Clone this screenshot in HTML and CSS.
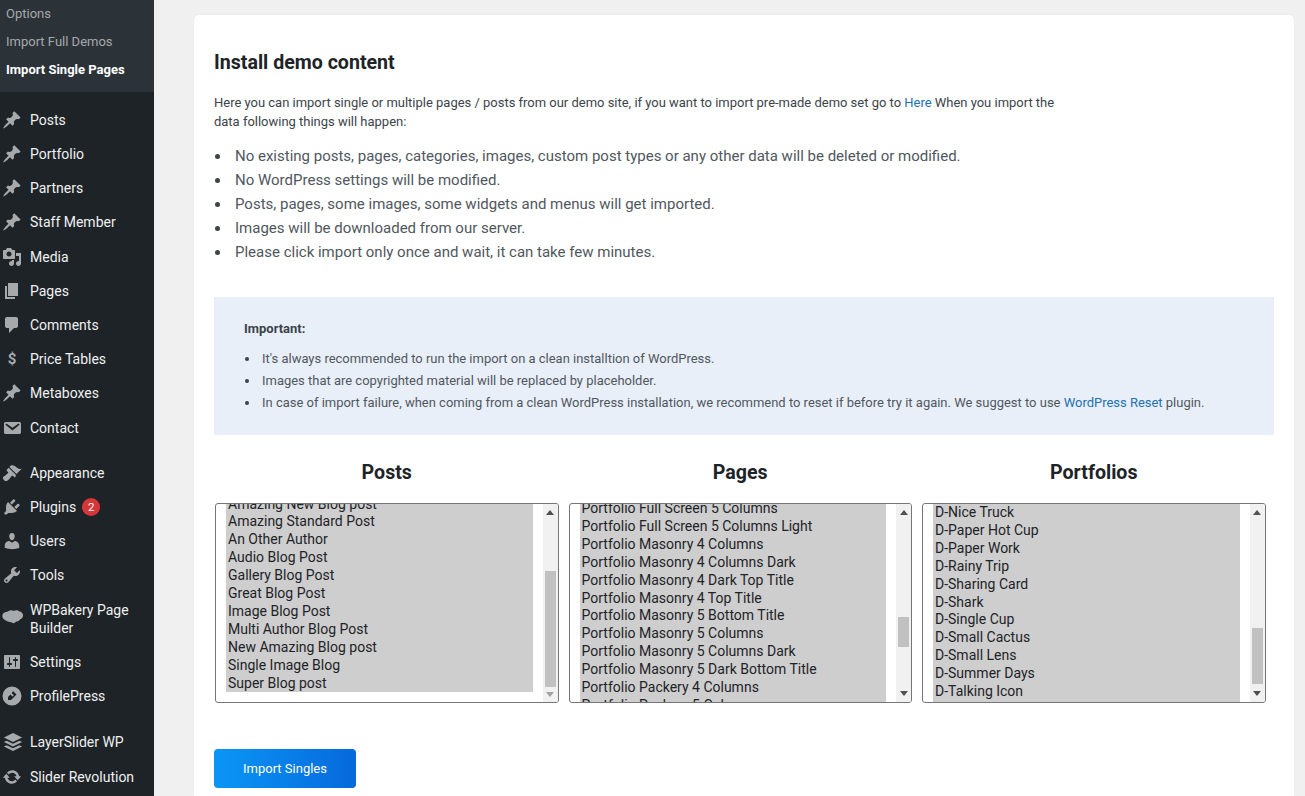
FILE: index.html
```html
<!DOCTYPE html>
<html lang="en">
<head>
<meta charset="utf-8">
<title>Install demo content</title>
<link rel="stylesheet" href="styles.css">
</head>
<body>
<aside class="sidebar">
  <ul class="submenu">
    <li>Options</li>
    <li>Import Full Demos</li>
    <li class="current">Import Single Pages</li>
  </ul>
  <ul class="menu">
    <li><svg viewBox="0 0 20 20"><path d="M10.44 3.02l1.82-1.82 6.36 6.35-1.83 1.82c-1.05-.68-2.48-.57-3.41.36l-.75.75c-.92.93-1.04 2.35-.35 3.41l-1.83 1.82-2.41-2.41-2.8 2.79c-.42.42-3.38 2.71-3.8 2.29s1.86-3.39 2.28-3.81l2.79-2.79L4.1 9.36l1.83-1.82c1.05.69 2.48.57 3.41-.36l.75-.75c.93-.92 1.04-2.35.35-3.41z"/></svg><span>Posts</span></li>
    <li><svg viewBox="0 0 20 20"><path d="M10.44 3.02l1.82-1.82 6.36 6.35-1.83 1.82c-1.05-.68-2.48-.57-3.41.36l-.75.75c-.92.93-1.04 2.35-.35 3.41l-1.83 1.82-2.41-2.41-2.8 2.79c-.42.42-3.38 2.71-3.8 2.29s1.86-3.39 2.28-3.81l2.79-2.79L4.1 9.36l1.83-1.82c1.05.69 2.48.57 3.41-.36l.75-.75c.93-.92 1.04-2.35.35-3.41z"/></svg><span>Portfolio</span></li>
    <li><svg viewBox="0 0 20 20"><path d="M10.44 3.02l1.82-1.82 6.36 6.35-1.83 1.82c-1.05-.68-2.48-.57-3.41.36l-.75.75c-.92.93-1.04 2.35-.35 3.41l-1.83 1.82-2.41-2.41-2.8 2.79c-.42.42-3.38 2.71-3.8 2.29s1.86-3.39 2.28-3.81l2.79-2.79L4.1 9.36l1.83-1.82c1.05.69 2.48.57 3.41-.36l.75-.75c.93-.92 1.04-2.35.35-3.41z"/></svg><span>Partners</span></li>
    <li><svg viewBox="0 0 20 20"><path d="M10.44 3.02l1.82-1.82 6.36 6.35-1.83 1.82c-1.05-.68-2.48-.57-3.41.36l-.75.75c-.92.93-1.04 2.35-.35 3.41l-1.83 1.82-2.41-2.41-2.8 2.79c-.42.42-3.38 2.71-3.8 2.29s1.86-3.39 2.28-3.81l2.79-2.79L4.1 9.36l1.83-1.82c1.05.69 2.48.57 3.41-.36l.75-.75c.93-.92 1.04-2.35.35-3.41z"/></svg><span>Staff Member</span></li>
    <li><svg viewBox="0 0 20 20"><path d="M13 11V4c0-.55-.45-1-1-1h-1.67L9 1H5L3.67 3H2c-.55 0-1 .45-1 1v7c0 .55.45 1 1 1h10c.55 0 1-.45 1-1zM7 4.5c1.38 0 2.5 1.12 2.5 2.5S8.38 9.5 7 9.5 4.5 8.38 4.5 7 5.62 4.5 7 4.5zM14 6h5v10.5c0 1.38-1.12 2.5-2.5 2.5S14 17.88 14 16.5s1.12-2.5 2.5-2.5c.17 0 .34.02.5.05V9h-3V6zm-4 8.05V13h2v3.5c0 1.38-1.12 2.5-2.5 2.5S7 17.88 7 16.5 8.12 14 9.5 14c.17 0 .34.02.5.05z"/></svg><span>Media</span></li>
    <li><svg viewBox="0 0 20 20"><path d="M6 15V2h10v13H6zm-1 1h8v2H3V5h2v11z"/></svg><span>Pages</span></li>
    <li><svg viewBox="0 0 20 20"><path d="M5 2h9c1.1 0 2 .9 2 2v7c0 1.1-.9 2-2 2h-2l-5 5v-5H5c-1.1 0-2-.9-2-2V4c0-1.1.9-2 2-2z"/></svg><span>Comments</span></li>
    <li><b class="dollar">$</b><span>Price Tables</span></li>
    <li><svg viewBox="0 0 20 20"><path d="M10.44 3.02l1.82-1.82 6.36 6.35-1.83 1.82c-1.05-.68-2.48-.57-3.41.36l-.75.75c-.92.93-1.04 2.35-.35 3.41l-1.83 1.82-2.41-2.41-2.8 2.79c-.42.42-3.38 2.71-3.8 2.29s1.86-3.39 2.28-3.81l2.79-2.79L4.1 9.36l1.83-1.82c1.05.69 2.48.57 3.41-.36l.75-.75c.93-.92 1.04-2.35.35-3.41z"/></svg><span>Metaboxes</span></li>
    <li><svg viewBox="0 0 20 20"><path d="M3.87 4h13.25C18.37 4 19 4.59 19 5.79v8.42c0 1.19-.63 1.79-1.88 1.79H3.87c-1.25 0-1.88-.6-1.88-1.79V5.79c0-1.2.63-1.79 1.88-1.79zm6.62 8.6l6.74-5.53c.24-.2.43-.66.13-1.07-.29-.41-.82-.42-1.17-.17l-5.7 3.86L4.8 5.83c-.35-.25-.88-.24-1.17.17-.3.41-.11.87.13 1.07z"/></svg><span>Contact</span></li>
    <li class="sep"><svg viewBox="0 0 20 20"><path d="M14.48 11.06L7.41 3.99l1.5-1.5c.5-.56 2.3-.47 3.51.32 1.21.8 1.43 1.28 2.91 2.1 1.18.64 2.45 1.26 4.45.85zm-.71.71L6.7 4.7 4.93 6.47c-.39.39-.39 1.02 0 1.41l1.06 1.06c.39.39.39 1.03 0 1.42-.6.6-1.43 1.11-2.21 1.69-.35.26-.7.53-1.01.84C1.43 13.23.76 14.22 1.05 15.5c.29 1.28 1.4 2.22 2.45 2.45 1.28.29 2.27-.38 3.62-1.72.31-.31.58-.66.84-1.01.58-.78 1.09-1.61 1.69-2.21.39-.39 1.03-.39 1.42 0l1.06 1.06c.39.39 1.02.39 1.41 0z"/></svg><span>Appearance</span></li>
    <li><svg viewBox="0 0 20 20"><path d="M13.11 4.36L9.87 7.6 8 5.73l3.24-3.24c.35-.34 1.05-.2 1.56.32.52.51.66 1.21.31 1.55zm-8 1.77l.91-1.12 9.01 9.01-1.19.84c-.71.71-2.63 1.16-3.82 1.16H6.14L4.9 17.26c-.59.59-1.54.59-2.12 0-.59-.58-.59-1.53 0-2.12l1.24-1.24v-3.88c0-1.13.4-3.19 1.09-3.89zm7.26 3.97l3.24-3.24c.34-.35 1.04-.21 1.55.31.52.51.66 1.21.31 1.55l-3.24 3.25z"/></svg><span>Plugins</span><em class="badge">2</em></li>
    <li><svg viewBox="0 0 20 20"><path d="M10 9.25c-2.27 0-2.73-3.44-2.73-3.44C7 4.02 7.82 2 9.97 2c2.16 0 2.98 2.02 2.71 3.81 0 0-.41 3.44-2.68 3.44zm0 2.57L12.72 10c2.39 0 4.52 2.33 4.52 4.53v2.49s-3.65 1.13-7.24 1.13c-3.65 0-7.24-1.13-7.24-1.13v-2.49c0-2.25 1.94-4.48 4.47-4.48z"/></svg><span>Users</span></li>
    <li><svg viewBox="0 0 20 20"><path d="M16.68 9.77c-1.34 1.34-3.3 1.67-4.95.99l-5.41 6.52c-.99.99-2.59.99-3.58 0s-.99-2.59 0-3.57l6.52-5.42c-.68-1.65-.35-3.61.99-4.95 1.28-1.28 3.12-1.62 4.72-1.06l-2.89 2.89 2.82 2.82 2.86-2.87c.53 1.58.18 3.39-1.08 4.65zM3.81 16.21c.4.39 1.04.39 1.43 0 .4-.4.4-1.04 0-1.43-.39-.4-1.03-.4-1.43 0-.39.39-.39 1.03 0 1.43z"/></svg><span>Tools</span></li>
    <li><svg class="wide" viewBox="0 0 22 20"><path d="M6 2.500c1.500-1.600 4.200-1.700 5.800-.6 1.600-1 4.400-.8 5.600.7 2 .2 3.800 1.800 3.600 4 .1 1.900-1.300 3.500-3 3.700-.6 1.600-2.400 2.700-4 2.100-1 1.800-3 2.300-4 1-2.600-.2-6.200-1-8-3.100C.2 8.900-.4 5.900 1.600 4.100 2.800 3 4.600 2.600 6 2.500z"/></svg><span>WPBakery Page Builder</span></li>
    <li><svg viewBox="0 0 20 20"><path d="M18 16V4c0-.55-.45-1-1-1H3c-.55 0-1 .45-1 1v12c0 .55.45 1 1 1h14c.55 0 1-.45 1-1zM8 11h1c.55 0 1 .45 1 1s-.45 1-1 1H8v1.500c0 .28-.22.5-.5.5s-.5-.22-.5-.5V13H6c-.55 0-1-.45-1-1s.45-1 1-1h1V5.500c0-.28.22-.5.5-.5s.5.22.5.5V11zm5-2h-1c-.55 0-1-.45-1-1s.45-1 1-1h1V5.500c0-.28.22-.5.5-.5s.5.22.5.5V7h1c.55 0 1 .45 1 1s-.45 1-1 1h-1v5.500c0 .28-.22.5-.5.5s-.5-.22-.5-.5V9z"/></svg><span>Settings</span></li>
    <li><svg viewBox="0 0 20 20"><path fill-rule="evenodd" d="M10 .5a9.500 9.500 0 1 0 0 19 9.500 9.500 0 0 0 0-19zM11 5l3.500 3.500L9 14H6v-3l2.500-2.500 2 2 1.300-1.300-2-2z"/></svg><span>ProfilePress</span></li>
    <li class="sep"><svg class="wide" viewBox="0 0 22 22"><path d="M11 1l10 5-10 5L1 6zM4 9.500l7 3.500 7-3.500 3 1.500-10 5-10-5zM4 14.500l7 3.500 7-3.500 3 1.500-10 5-10-5z"/></svg><span>LayerSlider WP</span></li>
    <li><svg viewBox="0 0 20 20"><path d="M10.200 3.280c3.530 0 6.430 2.610 6.920 6h2.080l-3.500 4-3.500-4h2.320c-.45-1.970-2.210-3.450-4.320-3.450-1.450 0-2.730.71-3.540 1.780L4.950 5.660C6.230 4.200 8.110 3.280 10.200 3.280zm-.4 13.440c-3.520 0-6.430-2.610-6.920-6H.8l3.500-4c1.170 1.330 2.330 2.670 3.500 4H5.480c.45 1.970 2.210 3.450 4.320 3.450 1.450 0 2.730-.71 3.540-1.780l1.710 1.950c-1.280 1.460-3.150 2.380-5.250 2.380z"/></svg><span>Slider Revolution</span></li>
  </ul>
</aside>
<main class="main">
  <section class="card">
    <h1>Install demo content</h1>
    <p class="intro">Here you can import single or multiple pages / posts from our demo site, if you want to import pre-made demo set go to <a href="#">Here</a> When you import the data following things will happen:</p>
    <ul class="points">
      <li>No existing posts, pages, categories, images, custom post types or any other data will be deleted or modified.</li>
      <li>No WordPress settings will be modified.</li>
      <li>Posts, pages, some images, some widgets and menus will get imported.</li>
      <li>Images will be downloaded from our server.</li>
      <li>Please click import only once and wait, it can take few minutes.</li>
    </ul>
    <div class="notice">
      <strong>Important:</strong>
      <ul>
        <li>It's always recommended to run the import on a clean installtion of WordPress.</li>
        <li>Images that are copyrighted material will be replaced by placeholder.</li>
        <li>In case of import failure, when coming from a clean WordPress installation, we recommend to reset if before try it again. We suggest to use <a href="#">WordPress Reset</a> plugin.</li>
      </ul>
    </div>
    <div class="columns">
      <div class="col">
        <h2>Posts</h2>
        <div class="select">
          <div class="viewport"><ul class="opts posts">
            <li>Amazing New Blog post</li><li>Amazing Standard Post</li><li>An Other Author</li><li>Audio Blog Post</li><li>Gallery Blog Post</li><li>Great Blog Post</li><li>Image Blog Post</li><li>Multi Author Blog Post</li><li>New Amazing Blog post</li><li>Single Image Blog</li><li>Super Blog post</li>
          </ul></div>
          <div class="bar"><i class="up"></i><div class="track"><div class="thumb t-posts"></div></div><i class="down off"></i></div>
        </div>
      </div>
      <div class="col">
        <h2>Pages</h2>
        <div class="select">
          <div class="viewport"><ul class="opts pages">
            <li>Portfolio Full Screen 5 Columns</li><li>Portfolio Full Screen 5 Columns Light</li><li>Portfolio Masonry 4 Columns</li><li>Portfolio Masonry 4 Columns Dark</li><li>Portfolio Masonry 4 Dark Top Title</li><li>Portfolio Masonry 4 Top Title</li><li>Portfolio Masonry 5 Bottom Title</li><li>Portfolio Masonry 5 Columns</li><li>Portfolio Masonry 5 Columns Dark</li><li>Portfolio Masonry 5 Dark Bottom Title</li><li>Portfolio Packery 4 Columns</li><li>Portfolio Packery 5 Columns</li>
          </ul></div>
          <div class="bar"><i class="up"></i><div class="track"><div class="thumb t-pages"></div></div><i class="down"></i></div>
        </div>
      </div>
      <div class="col">
        <h2>Portfolios</h2>
        <div class="select">
          <div class="viewport"><ul class="opts">
            <li>D-Nice Truck</li><li>D-Paper Hot Cup</li><li>D-Paper Work</li><li>D-Rainy Trip</li><li>D-Sharing Card</li><li>D-Shark</li><li>D-Single Cup</li><li>D-Small Cactus</li><li>D-Small Lens</li><li>D-Summer Days</li><li>D-Talking Icon</li><li>D-Tea Time</li>
          </ul></div>
          <div class="bar"><i class="up"></i><div class="track"><div class="thumb t-folios"></div></div><i class="down"></i></div>
        </div>
      </div>
    </div>
    <button class="import" type="button">Import Singles</button>
  </section>
</main>
</body>
</html>
```
FILE: styles.css
```css
* { box-sizing: border-box; }
html, body { margin: 0; height: 796px; overflow: hidden; }
body {
  display: flex;
  background: #f0f0f1;
  font-family: Roboto, "Liberation Sans", sans-serif;
  color: #3c434a;
}
ul { list-style: none; margin: 0; padding: 0; }
a { color: #2271b1; text-decoration: none; }

.sidebar {
  width: 154px;
  flex: none;
  height: 796px;
  overflow: hidden;
  background: #1d2327;
  color: #f0f0f1;
  font-size: 14px;
}
.submenu {
  height: 92px;
  background: #2c3338;
  font-size: 13px;
  color: #a5a8ab;
}
.submenu li { height: 28px; line-height: 28px; padding-left: 6px; }
.submenu .current { color: #fff; font-weight: 700; }
.menu { padding-top: 10.8px; }
.menu li {
  display: flex;
  align-items: center;
  padding: 8.1px 8px 8.1px 3px;
  line-height: 18px;
}
.menu .sep { margin-top: 11px; }
.menu svg {
  width: 20px;
  height: 20px;
  flex: none;
  margin: -1px 8.5px -1px -1.5px;
  fill: #a7aaad;
}
.menu svg.wide { width: 22px; height: 20px; margin: 0 6px 0 -1px; }
.dollar {
  width: 18px;
  margin-right: 9px;
  text-align: center;
  color: #a7aaad;
  font-size: 15px;
}
.badge {
  width: 18px;
  height: 18px;
  margin-left: 6px;
  border-radius: 50%;
  background: #d63638;
  color: #fff;
  font: 11.5px/18px Roboto, sans-serif;
  text-align: center;
}

.main { flex: 1; min-width: 0; padding: 15px 11px 0 40px; }
.card {
  height: 781px;
  padding: 20px;
  background: #fff;
  border-radius: 5px 5px 0 0;
  box-shadow: 0 0 2px rgba(0, 0, 0, .05);
}
h1 {
  margin: 15px 0 0;
  font-size: 19.6px;
  line-height: 26px;
  font-weight: 700;
  color: #1d2327;
}
.intro {
  width: 860px;
  margin: 17px 0 0;
  font-size: 12.98px;
  line-height: 19px;
}
.points { margin-top: 13px; font-size: 15px; line-height: 24px; color: #50575e; }
.points li { position: relative; padding-left: 21px; }
.points li::before, .notice li::before {
  content: "";
  position: absolute;
  left: 1px;
  top: 10px;
  width: 5px;
  height: 5px;
  border-radius: 50%;
  background: #3c434a;
}
.notice {
  height: 138px;
  margin-top: 33px;
  padding: 23px 30px 0;
  background: #e8eff9;
  font-size: 12.98px;
  line-height: 18px;
}
.notice strong { display: block; }
.notice ul { margin-top: 10px; color: #50575e; }
.notice li { position: relative; padding: 2px 0 2px 18px; }
.notice li::before { left: 1px; top: 9px; width: 4px; height: 4px; }

.columns {
  display: grid;
  grid-template-columns: repeat(3, 343.5px);
  column-gap: 10px;
  margin: 26px 0 0 1px;
}
h2 {
  margin: 0 0 18px;
  font-size: 19.6px;
  line-height: 24px;
  font-weight: 700;
  text-align: center;
  color: #1d2327;
}
.select {
  display: flex;
  height: 200px;
  border: 1px solid #767676;
  border-radius: 3px;
  background: #fff;
  overflow: hidden;
}
.viewport { flex: 1; min-width: 0; padding: 0 10px; overflow: hidden; }
.opts { background: #cecece; font-size: 14px; line-height: 17.9px; color: #1d2327; }
.opts li { padding-left: 2px; white-space: nowrap; }
.posts { margin-top: -8.5px; }
.pages { margin-top: -4px; }

.bar {
  display: flex;
  flex-direction: column;
  align-items: center;
  width: 15px;
  flex: none;
  background: #f1f1f1;
}
.bar i { flex: none; width: 0; height: 0; border: 4px solid transparent; }
.bar .up { border-top: 0; border-bottom: 5px solid #505050; margin: 6px 0 5px; }
.bar .down { border-bottom: 0; border-top: 5px solid #505050; margin: 5px 0 6px; }
.bar .off { border-top-color: #a3a3a3; }
.track { flex: 1; width: 11px; }
.thumb { width: 11px; background: #c1c1c1; }
.t-posts { height: 116px; margin-top: 51px; }
.t-pages { height: 30px; margin-top: 97px; }
.t-folios { height: 56px; margin-top: 108px; }

.import {
  display: block;
  width: 142px;
  height: 39px;
  margin-top: 46px;
  border: 0;
  border-radius: 4px;
  background: linear-gradient(90deg, #0a96f6, #0669dc);
  color: #fff;
  font: 13px Roboto, sans-serif;
}
```
